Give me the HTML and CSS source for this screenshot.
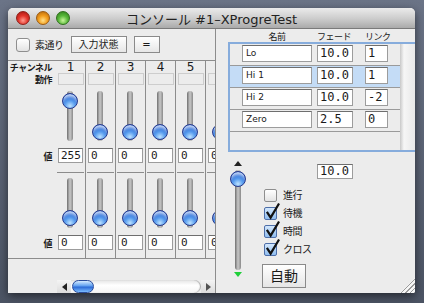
FILE: index.html
```html
<!DOCTYPE html>
<html lang="ja">
<head>
    <meta charset="UTF-8">
    <title>コンソール #1-XProgreTest</title>
    <link rel="stylesheet" href="styles.css">
</head>
<body>
    <div class="window">
        <!-- Barre de titre -->
        <div class="titlebar">
            <div class="lights">
                <span class="light red"></span>
                <span class="light orange"></span>
                <span class="light green"></span>
            </div>
            <div class="title">コンソール #1–XProgreTest</div>
            <div></div>
        </div>

        <div class="content">
            <!-- Partie gauche : canaux -->
            <div class="left">
                <div class="toolbar">
                    <span class="check big"></span>
                    <span class="tb-label">素通り</span>
                    <span class="btn">入力状態</span>
                    <span class="btn eq">=</span>
                </div>

                <div class="channels">
                    <div class="chan-grid">
                        <div class="labels">
                            <div class="lb-head">チャンネル</div>
                            <div class="lb-act">動作</div>
                            <div class="lb-slider"></div>
                            <div class="lb-val">値</div>
                            <div class="lb-sep"></div>
                            <div class="lb-slider low"></div>
                            <div class="lb-val">値</div>
                        </div>
                        <div class="cols">
                            <div class="col">
                                <div class="num">1</div>
                                <div class="act"><span class="act-box"></span></div>
                                <div class="slider"><span class="track"></span><span class="knob up"></span></div>
                                <div class="val"><span class="field">255</span></div>
                                <div class="sep"></div>
                                <div class="slider low"><span class="track"></span><span class="knob"></span></div>
                                <div class="val"><span class="field">0</span></div>
                            </div>
                            <div class="col">
                                <div class="num">2</div>
                                <div class="act"><span class="act-box"></span></div>
                                <div class="slider"><span class="track"></span><span class="knob"></span></div>
                                <div class="val"><span class="field">0</span></div>
                                <div class="sep"></div>
                                <div class="slider low"><span class="track"></span><span class="knob"></span></div>
                                <div class="val"><span class="field">0</span></div>
                            </div>
                            <div class="col">
                                <div class="num">3</div>
                                <div class="act"><span class="act-box"></span></div>
                                <div class="slider"><span class="track"></span><span class="knob"></span></div>
                                <div class="val"><span class="field">0</span></div>
                                <div class="sep"></div>
                                <div class="slider low"><span class="track"></span><span class="knob"></span></div>
                                <div class="val"><span class="field">0</span></div>
                            </div>
                            <div class="col">
                                <div class="num">4</div>
                                <div class="act"><span class="act-box"></span></div>
                                <div class="slider"><span class="track"></span><span class="knob"></span></div>
                                <div class="val"><span class="field">0</span></div>
                                <div class="sep"></div>
                                <div class="slider low"><span class="track"></span><span class="knob"></span></div>
                                <div class="val"><span class="field">0</span></div>
                            </div>
                            <div class="col">
                                <div class="num">5</div>
                                <div class="act"><span class="act-box"></span></div>
                                <div class="slider"><span class="track"></span><span class="knob"></span></div>
                                <div class="val"><span class="field">0</span></div>
                                <div class="sep"></div>
                                <div class="slider low"><span class="track"></span><span class="knob"></span></div>
                                <div class="val"><span class="field">0</span></div>
                            </div>
                            <!-- 6e canal, coupé par le bord -->
                            <div class="col">
                                <div class="num"></div>
                                <div class="act"><span class="act-box"></span></div>
                                <div class="slider"><span class="track"></span><span class="knob"></span></div>
                                <div class="val"><span class="field">0</span></div>
                                <div class="sep"></div>
                                <div class="slider low"><span class="track"></span><span class="knob"></span></div>
                                <div class="val"><span class="field">0</span></div>
                            </div>
                        </div>
                    </div>

                    <!-- Barre de défilement horizontale -->
                    <div class="hscroll">
                        <span class="sb-cap"><span class="tri-left"></span></span>
                        <span class="sb-track"><span class="sb-thumb"></span></span>
                        <span class="sb-cap end"><span class="tri-right"></span></span>
                    </div>
                </div>
            </div>

            <!-- Partie droite : cues -->
            <div class="right">
                <div class="tbl-head">
                    <span class="h-name">名前</span>
                    <span class="h-fade">フェード</span>
                    <span class="h-link">リンク</span>
                </div>
                <div class="tbl">
                    <div class="rows">
                        <div class="row">
                            <span class="field name">Lo</span>
                            <span class="field fade">10.0</span>
                            <span class="field link">1</span>
                        </div>
                        <div class="row selected">
                            <span class="field name">Hi 1</span>
                            <span class="field fade">10.0</span>
                            <span class="field link">1</span>
                        </div>
                        <div class="row">
                            <span class="field name">Hi 2</span>
                            <span class="field fade">10.0</span>
                            <span class="field link">-2</span>
                        </div>
                        <div class="row">
                            <span class="field name">Zero</span>
                            <span class="field fade">2.5</span>
                            <span class="field link">0</span>
                        </div>
                    </div>
                    <div class="vtrack"></div>
                </div>

                <div class="lower">
                    <div class="vslider">
                        <span class="arrow-up"></span>
                        <div class="vtrack-wrap"><span class="vbar"></span><span class="knob"></span></div>
                        <span class="arrow-down"></span>
                    </div>
                    <div class="controls">
                        <span class="field master">10.0</span>
                        <div class="opts">
                            <div class="opt"><span class="check"></span><span>進行</span></div>
                            <div class="opt"><span class="check on"><svg viewBox="0 0 16 18"><polyline points="2,10 6,16 15,1" /></svg></span><span>待機</span></div>
                            <div class="opt"><span class="check on"><svg viewBox="0 0 16 18"><polyline points="2,10 6,16 15,1" /></svg></span><span>時間</span></div>
                            <div class="opt"><span class="check on"><svg viewBox="0 0 16 18"><polyline points="2,10 6,16 15,1" /></svg></span><span>クロス</span></div>
                        </div>
                        <span class="btn auto">自動</span>
                    </div>
                </div>
            </div>
        </div>

        <div class="grip"></div>
    </div>
</body>
</html>
```

FILE: styles.css
```css
/* Général */
body {
    margin: 0;
    height: 303px;
    overflow: hidden;
    background: linear-gradient(#6b7487, #4c5464);
    font-family: "DejaVu Sans", "Noto Sans CJK JP", sans-serif;
    color: #1a1a1a;
}

.window {
    position: relative;
    margin: 8px 0 0 8px;
    width: 407px;
    height: 285px;
    background-color: #ececec;
    border-radius: 5px 5px 0 0;
    overflow: hidden;
    box-shadow: 0 3px 10px rgba(0, 0, 0, 0.55);
}

/* Barre de titre */
.titlebar {
    display: grid;
    grid-template-columns: 1fr auto 1fr;
    align-items: center;
    height: 20px;
    border-bottom: 1px solid #7a7a7a;
    background: linear-gradient(#ebebeb, #cbcbcb 55%, #aaaaaa);
}

.lights {
    display: flex;
    gap: 6px;
    padding-left: 8px;
}

.light {
    width: 14px;
    height: 14px;
    border-radius: 50%;
    box-sizing: border-box;
}

.red {
    background: radial-gradient(circle at 50% 70%, #ff9c8f, #e2352b 45%, #a1150f 100%);
    border: 1px solid #8d1e18;
}

.orange {
    background: radial-gradient(circle at 50% 70%, #ffe08a, #f29d1c 45%, #b0620a 100%);
    border: 1px solid #9a5a12;
}

.green {
    background: radial-gradient(circle at 50% 70%, #c9f59b, #58b83a 45%, #2c7a17 100%);
    border: 1px solid #2f6e1c;
}

.title {
    font-size: 13px;
    color: #222;
    white-space: nowrap;
}

.content {
    display: flex;
    height: 264px;
}

/* Colonne gauche */
.left {
    width: 207px;
    flex-shrink: 0;
    overflow: hidden;
    border-right: 1px solid #8c8c8c;
}

.toolbar {
    display: flex;
    align-items: center;
    height: 31px;
    padding-left: 8px;
    font-size: 10px;
}

.check {
    position: relative;
    display: inline-block;
    width: 13px;
    height: 13px;
    box-sizing: border-box;
    border: 1px solid #8e8e8e;
    border-radius: 2px;
    background: linear-gradient(#ffffff, #e3e3e3);
}

.check.big {
    width: 14px;
    height: 14px;
    border-radius: 3px;
}

.check.on {
    background: linear-gradient(#d3e7fc, #8fbdf0);
    border-color: #4d6ea8;
}

.check svg {
    position: absolute;
    left: 0;
    top: -6px;
    width: 15px;
    height: 18px;
    fill: none;
    stroke: #111;
    stroke-width: 2.4;
}

.tb-label {
    margin-left: 5px;
    letter-spacing: -0.5px;
}

.btn {
    display: inline-block;
    box-sizing: border-box;
    height: 17px;
    line-height: 15px;
    padding: 0 7px;
    margin-left: 7px;
    border: 1px solid #8a8a8a;
    background: linear-gradient(#ffffff, #e6e6e6);
    font-size: 10px;
    text-align: center;
}

.btn.eq {
    width: 26px;
    padding: 0;
}

.channels {
    border-top: 1px solid #8c8c8c;
}

.chan-grid {
    display: flex;
    height: 197px;
    border-bottom: 1px solid #8c8c8c;
}

.labels {
    width: 48px;
    flex-shrink: 0;
    text-align: right;
    font-size: 9px;
    font-weight: bold;
    letter-spacing: -0.5px;
}

.labels > div {
    padding-right: 4px;
}

.lb-head { height: 12px; line-height: 12px; padding-top: 1px; }
.lb-act { height: 12px; line-height: 12px; margin-top: 0; }
.lb-slider { height: 61px; }
.lb-slider.low { height: 60px; }
.lb-val { height: 20px; line-height: 20px; }
.lb-sep { height: 7px; }

.cols {
    display: flex;
    min-width: 0;
    overflow: hidden;
}

.col {
    flex-shrink: 0;
    width: 29px;
    border-right: 1px solid #8c8c8c;
}

.num {
    height: 12px;
    line-height: 12px;
    text-align: center;
    font-size: 12px;
}

.act {
    height: 12px;
}

.act-box {
    display: block;
    margin: 0 auto;
    width: 26px;
    height: 12px;
    box-sizing: border-box;
    border: 1px solid #cdcdcd;
    background-color: #ececec;
}

/* Curseurs */
.slider {
    position: relative;
    height: 61px;
}

.slider.low {
    height: 60px;
}

.track {
    position: absolute;
    left: 11px;
    top: 6px;
    width: 6px;
    height: 50px;
    border-radius: 3px;
    background: linear-gradient(to right, #6f6f6f, #c8c8c8 50%, #8a8a8a);
}

.slider.low .track {
    top: 5px;
}

.knob {
    position: absolute;
    left: 6px;
    top: 39px;
    width: 16px;
    height: 16px;
    box-sizing: border-box;
    border-radius: 50%;
    border: 1px solid #26398c;
    background: radial-gradient(circle at 50% 85%, #bfe3ff 0, #5ca0ef 35%, #1d5fd2 70%, #3a7ee8 100%);
    box-shadow: inset 0 4px 3px -1px rgba(255, 255, 255, 0.7);
}

.knob.up {
    top: 8px;
}

.slider.low .knob {
    top: 37px;
}

.val {
    height: 20px;
    padding-top: 2px;
    box-sizing: border-box;
}

.field {
    display: block;
    box-sizing: border-box;
    height: 15px;
    line-height: 13px;
    padding-left: 2px;
    border: 1px solid #9c9c9c;
    border-top-color: #6e6e6e;
    background-color: #ffffff;
    font-family: "DejaVu Sans Mono", monospace;
    font-size: 11px;
    white-space: nowrap;
    overflow: hidden;
}

.val .field {
    width: 25px;
    margin-left: 2px;
}

.sep {
    height: 6px;
    margin: 0 1px;
    border-bottom: 1px solid #8c8c8c;
}

/* Défilement horizontal */
.hscroll {
    display: flex;
    height: 13px;
    margin: 21px 0 0 49px;
}

.sb-cap {
    display: flex;
    align-items: center;
    justify-content: center;
    width: 14px;
    background: linear-gradient(#f4f4f4, #dcdcdc);
}

.tri-left {
    border-top: 4px solid transparent;
    border-bottom: 4px solid transparent;
    border-right: 5px solid #222;
}

.tri-right {
    border-top: 4px solid transparent;
    border-bottom: 4px solid transparent;
    border-left: 5px solid #555;
}

.sb-track {
    flex: 1;
    display: flex;
    border-radius: 0 7px 7px 0;
    background: linear-gradient(#e4e4e4, #ffffff 40%, #f4f4f4);
    box-shadow: inset -1px 0 1px #aaa;
}

.sb-thumb {
    width: 22px;
    height: 13px;
    margin-left: 1px;
    box-sizing: border-box;
    border-radius: 7px;
    border: 1px solid #2a4c9a;
    background: linear-gradient(#d5ebff, #5f9ff0 45%, #2c6ad6 55%, #7bbcff);
}

/* Colonne droite */
.right {
    width: 200px;
    overflow: hidden;
}

.tbl-head {
    display: flex;
    height: 13px;
    padding-left: 26px;
    font-size: 9px;
    line-height: 16px;
    letter-spacing: -0.5px;
    white-space: nowrap;
}

.h-name { width: 70px; text-align: center; }
.h-fade { width: 36px; margin-left: 5px; }
.h-link { margin-left: 12px; }

.tbl {
    display: flex;
    width: 200px;
    height: 110px;
    margin-left: 12px;
    box-sizing: border-box;
    border: 2px solid #86acdc;
    border-right: none;
    background-color: #ececec;
}

.rows {
    width: 170px;
}

.row {
    display: flex;
    padding: 1px 0 0 12px;
    box-sizing: border-box;
    height: 22px;
    border-bottom: 1px solid #9a9a9a;
}

.row.selected {
    background-color: #c4dcf6;
}

.row .field {
    height: 17px;
    line-height: 15px;
}

.field.name {
    width: 70px;
    padding-left: 3px;
    font-family: "DejaVu Sans", sans-serif;
    font-size: 9px;
}

.field.fade {
    width: 36px;
    margin-left: 5px;
    font-size: 12px;
}

.field.link {
    width: 23px;
    margin-left: 12px;
    font-size: 12px;
}

.vtrack {
    flex: 1;
    background: linear-gradient(to right, #c8c8c8, #f6f6f6 4px, #eeeeee 10px, #dadada);
}

.lower {
    display: flex;
    padding-left: 14px;
}

.vslider {
    display: flex;
    flex-direction: column;
    align-items: center;
    width: 16px;
    padding-top: 9px;
}

.arrow-up {
    border-left: 4px solid transparent;
    border-right: 4px solid transparent;
    border-bottom: 5px solid #222;
}

.vtrack-wrap {
    position: relative;
    width: 16px;
    height: 100px;
    margin-top: 4px;
}

.vbar {
    position: absolute;
    left: 5px;
    top: 0;
    width: 6px;
    height: 100px;
    border-radius: 3px;
    background: linear-gradient(to right, #6f6f6f, #c8c8c8 50%, #8a8a8a);
}

.vtrack-wrap .knob {
    left: 0;
    top: 1px;
}

.arrow-down {
    margin-top: 2px;
    border-left: 4px solid transparent;
    border-right: 4px solid transparent;
    border-top: 5px solid #1fcf3a;
}

.controls {
    display: flex;
    flex-direction: column;
    align-items: flex-start;
    margin-left: 16px;
}

.field.master {
    width: 36px;
    margin: 12px 0 0 55px;
    font-size: 12px;
}

.opts {
    margin-top: 10px;
    font-size: 10px;
    letter-spacing: -0.5px;
}

.opt {
    display: flex;
    align-items: flex-start;
    height: 18px;
    padding-left: 2px;
}

.opt span + span {
    margin-left: 6px;
    line-height: 13px;
}

.btn.auto {
    width: 44px;
    height: 24px;
    line-height: 22px;
    margin: 3px 0 0 0;
    padding: 0;
    font-size: 14px;
}

/* Poignée de redimensionnement */
.grip {
    position: absolute;
    right: 0;
    bottom: 0;
    width: 15px;
    height: 15px;
    background: repeating-linear-gradient(135deg, #f6f6f6 0 2px, #9a9a9a 2px 3px);
    clip-path: polygon(100% 0, 100% 100%, 0 100%);
}
```
